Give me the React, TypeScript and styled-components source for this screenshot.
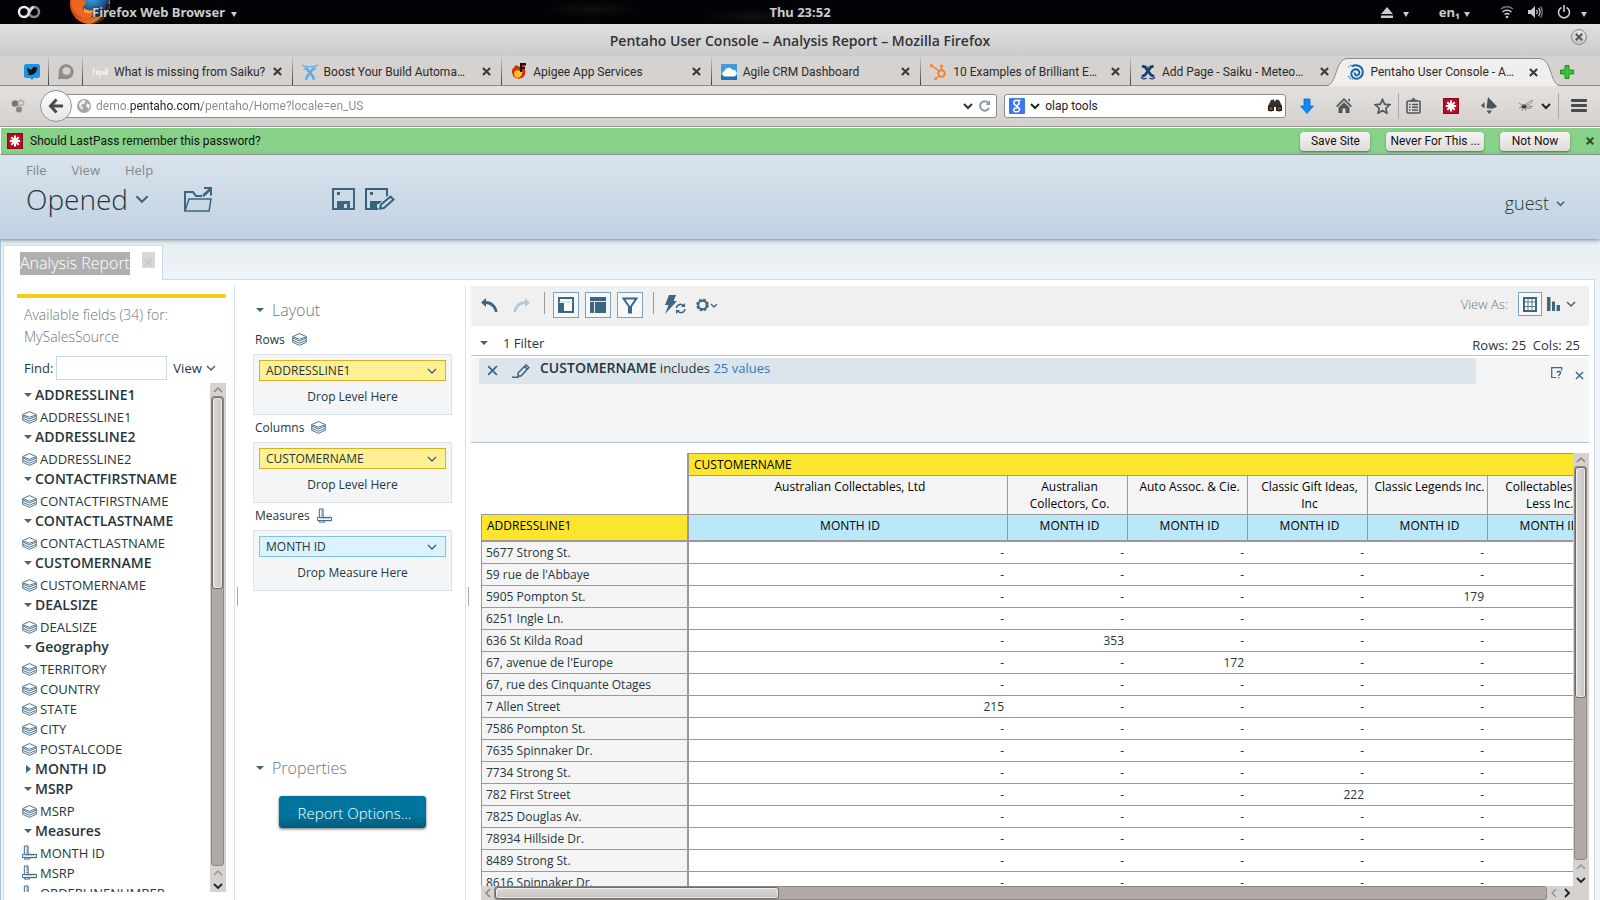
import React from 'react';
import styled, { createGlobalStyle, css } from 'styled-components';

const UI = '"Open Sans", "Noto Sans", sans-serif';
const CHROME = 'Roboto, "Liberation Sans", sans-serif';
const INK = '#3d6480';

const GlobalStyle = createGlobalStyle`
  *, *::before, *::after { box-sizing: border-box; }
  body { margin: 0; font-family: ${UI}; font-size: 12px; color: #26363d; background: #fff; }
  button, input { font: inherit; color: inherit; margin: 0; padding: 0; border: 0; background: none; }
  button { cursor: pointer; white-space: nowrap; }
  svg { display: block; flex: none; }
  a { text-decoration: none; }
`;

const Page = styled.div`
  height: 100vh;
  display: flex;
  flex-direction: column;
  overflow: hidden;
`;

/* ---------- desktop bar and window chrome ---------- */

const DesktopBar = styled.header`
  flex: none;
  height: 24px;
  display: grid;
  grid-template-columns: 1fr auto 1fr;
  align-items: center;
  font: 700 13px "Noto Sans", sans-serif;
  color: #ccc;
  background:
    radial-gradient(ellipse 50px 8px at 37% 40%, #110e0e, transparent),
    radial-gradient(ellipse 50px 8px at 47% 70%, #110e0e, transparent),
    #020306;
  overflow: hidden;
`;
const BarLeft = styled.div`
  display: flex;
  align-items: center;
  padding-left: 17px;
  gap: 29px;
`;
const AppMenu = styled.button`
  display: flex;
  align-items: center;
  gap: 6px;
`;
const AppMenuLabel = styled.span`margin-left: -26px; text-shadow: 0 0 2px #000;`;
const BarRight = styled.div`
  display: flex;
  align-items: center;
  justify-content: flex-end;
  gap: 30px;
  padding-right: 13px;
`;
const BarItem = styled.button<{ $gap: number }>`
  display: flex;
  align-items: center;
  gap: ${p => p.$gap}px;
`;
const StatusIcons = styled.div`display: flex; align-items: center; gap: 14px;`;
const TinyCaret = styled.span`
  border: 3px solid transparent;
  border-top: 5px solid #ccc;
  border-bottom: 0;
  margin-top: 4px;
`;

const TitleBar = styled.div`
  flex: none;
  height: 32px;
  display: grid;
  grid-template-columns: 1fr auto 1fr;
  align-items: center;
  background: linear-gradient(#e0e0e0, #cbcbcb);
  font: 600 14px ${UI};
  color: #333;
`;
const WindowClose = styled.button`
  grid-column: 3;
  justify-self: end;
  margin: 0 13px 6px 0;
  width: 16px;
  height: 16px;
  border-radius: 50%;
  border: 1px solid #888;
  background: linear-gradient(#e6e6e6, #c4c4c4);
  display: grid;
  place-items: center;
`;

const TabStrip = styled.nav`
  flex: none;
  height: 30px;
  display: flex;
  padding-left: 15px;
  background: #d6d2cf;
  border-bottom: 1px solid #8d8a86;
  font: 12px ${CHROME};
  color: #2b2b2b;
`;
const PinnedTab = styled.button`
  width: 34px;
  height: 29px;
  padding-top: 2px;
  display: grid;
  place-items: center;
  border-right: 1px solid;
  border-image: linear-gradient(#d6d2cf, #3a3a38) 1;
`;
const TabBox = styled.div<{ $active?: boolean; $last?: boolean }>`
  flex: 1 1 0;
  min-width: 0;
  height: 29px;
  position: relative;
  display: flex;
  align-items: center;
  padding: 2px 10px 0 9px;
  gap: 6px;
  ${p => !p.$active && !p.$last && css`
    border-right: 1px solid;
    border-image: linear-gradient(#d6d2cf, #3a3a38) 1;
  `}
  ${p => p.$active && css`
    height: 30px;
    background: linear-gradient(#8d8a86 1px, #f0efed 1px) no-repeat 9px 2px / calc(100% - 17px) 100%;
  `}
`;
const TabEdge = styled.svg<{ $side: 'left' | 'right' }>`
  position: absolute;
  top: 2px;
  ${p => p.$side}: -13px;
  ${p => p.$side === 'right' && 'transform: scaleX(-1);'}
`;
const TabLabel = styled.button`
  flex: 1;
  min-width: 0;
  height: 100%;
  display: flex;
  align-items: center;
  gap: 6px;
  text-align: left;
  position: relative;
`;
const PlainButton = styled.button`
  display: grid;
  place-items: center;
  position: relative;
`;
const NewTab = styled.button`
  width: 52px;
  display: grid;
  place-items: center;
  padding: 2px 14px 0 0;
`;

const NavBar = styled.div`
  flex: none;
  height: 41px;
  display: flex;
  align-items: center;
  background: linear-gradient(#e4e1df, #d4d0cd);
  border-bottom: 1px solid #9a9693;
  padding: 0 13px 1px 11px;
  font: 12px ${CHROME};
  color: #222;
`;
const BackButton = styled.button`
  width: 32px;
  height: 32px;
  margin: 0 -12px 0 15px;
  border-radius: 50%;
  border: 1px solid #8797a6;
  background: linear-gradient(#fff, #e6e4e3);
  display: grid;
  place-items: center;
  z-index: 1;
`;
const Field = styled.div<{ $grow: number }>`
  flex: ${p => p.$grow} 1 0;
  min-width: 0;
  height: 24px;
  display: flex;
  align-items: center;
  gap: 4px;
  background: #fff;
  border: 1px solid #8e8a87;
  border-radius: 3px;
`;
const UrlField = styled(Field)`padding: 0 5px 0 16px; margin-right: 7px; gap: 5px;`;
const SearchField = styled(Field)`padding: 0 2px 0 4px; gap: 5px;`;
const FieldInput = styled.input`
  flex: 1;
  min-width: 0;
  height: 22px;
  outline: none;
`;
const UrlInput = styled(FieldInput)`
  color: transparent;
  background: linear-gradient(90deg, #8a8a8a 33px, #222 33px 106px, #8a8a8a 106px);
  background-clip: text;
`;
const NavTools = styled.div`
  display: flex;
  align-items: center;
  gap: 22px;
  padding-left: 14px;
`;
const ToolPair = styled.div`display: flex; align-items: center; gap: 7px;`;
const NavRule = styled.span`width: 1px; height: 26px; background: #aaa9ad;`;

const Notice = styled.div`
  flex: none;
  height: 28px;
  display: flex;
  align-items: center;
  gap: 16px;
  background: #87d189;
  border: solid;
  border-width: 1px 0 1px 1px;
  border-color: #fff transparent #8f9a8c #fff;
  padding: 0 6px;
  font: 12px ${CHROME};
  color: #111;
`;
const NoticeText = styled.p`
  flex: 1;
  margin: 0;
  display: flex;
  align-items: center;
  gap: 7px;
`;
const NoticeButton = styled.button`
  height: 19px;
  min-width: 70px;
  padding: 0 4px;
  border-radius: 4px;
  background: linear-gradient(#f6f5f4, #dedad8);
  box-shadow: 0 1px 2px #4d7a4e;
`;

/* ---------- console header ---------- */

const ConsoleHeader = styled.header`
  flex: none;
  height: 84px;
  display: flex;
  justify-content: space-between;
  align-items: flex-start;
  padding: 5px 35px 0 26px;
  background: linear-gradient(#d9e3ec, #c1d2e2);
  box-shadow: 0 1px 4px #6f7f8c;
  position: relative;
`;
const MenuRow = styled.div`
  display: flex;
  gap: 25px;
  font-size: 13px;
  line-height: 20px;
  color: #84888b;
`;
const ActionRow = styled.div`
  display: flex;
  align-items: center;
  height: 38px;
`;
const Perspective = styled.button`
  display: flex;
  align-items: center;
  gap: 7px;
  font-weight: 300;
  font-size: 28px;
  line-height: 38px;
  margin-right: 35px;
`;
const SaveGroup = styled.div`display: flex; gap: 10px; margin-left: 120px;`;
const UserMenu = styled.button`
  display: flex;
  align-items: center;
  gap: 7px;
  margin-top: 30px;
  font-weight: 300;
  font-size: 18px;
  line-height: 26px;
`;

/* ---------- workspace ---------- */

const Workspace = styled.main`
  flex: 1;
  min-height: 0;
  display: flex;
  flex-direction: column;
  padding: 6px 5px 0 3px;
  border-left: 1px solid #a9c5dc;
  background: linear-gradient(#e6eef2, #f2f6fa 60px);
`;
const ReportTabs = styled.div`display: flex; align-items: flex-end; height: 35px; margin-left: -1px;`;
const ReportTab = styled.div`
  height: 35px;
  width: 160px;
  display: flex;
  align-items: flex-start;
  gap: 12px;
  padding: 6px 0 0 16px;
  background: #fff;
  border: 1px solid #cbdce8;
  border-bottom: 0;
  z-index: 1;
`;
const ReportName = styled.button`
  font-weight: 300;
  font-size: 16px;
  line-height: 23px;
  color: #fff;
  background: #afafaf;
`;
const ReportClose = styled.button`
  width: 13px;
  height: 16px;
  background: #d7d7d7;
  display: grid;
  place-items: end center;
  padding-bottom: 1px;
`;
const TabsRest = styled.div`flex: 1; border-bottom: 1px solid #cbdce8;`;
const Report = styled.div`
  flex: 1;
  min-height: 0;
  display: flex;
  padding: 6px 5px 0 0;
  background: #fff;
  border-left: 1px solid #cbdce8;
  border-right: 1px solid #cbdce8;
  margin-left: -1px;
`;
const Splitter = styled.div`
  flex: none;
  width: 6px;
  border-left: 1px solid #d5e3ec;
  display: flex;
  align-items: center;
  padding: 6px 0 0 2px;
  &::after { content: ''; width: 1px; height: 19px; background: #a4a9ad; }
`;

/* fields */

const FieldsPanel = styled.section`
  flex: none;
  width: 230px;
  display: flex;
  flex-direction: column;
  padding: 8px 8px 8px 13px;
`;
const FieldsHead = styled.div`
  border-top: 4px solid #f5cf16;
  padding: 6px 0 0 7px;
`;
const SourceName = styled.h2`
  margin: 0 0 8px;
  font-weight: 300;
  font-size: 14px;
  line-height: 22px;
  color: #6f7679;
`;
const FindRow = styled.div`
  display: flex;
  align-items: center;
  font-size: 13px;
  margin-bottom: 3px;
`;
const FindInput = styled.input`
  width: 111px;
  height: 24px;
  background: #fff;
  border: 1px solid #c8dae7;
  margin: 0 6px 0 3px;
`;
const MenuButton = styled.button`display: flex; align-items: center; gap: 4px;`;
const TreeWrap = styled.div`flex: 1; min-height: 0; display: flex;`;
const Tree = styled.ul`
  flex: 1;
  margin: 0;
  padding: 2px 0 0 5px;
  list-style: none;
  overflow: hidden;
`;
const SubTree = styled.ul`margin: 0; padding: 2px 0 0; list-style: none;`;
const GroupButton = styled.button`
  display: flex;
  align-items: center;
  gap: 3px;
  padding-left: 2px;
  height: 20px;
  font-weight: 600;
  font-size: 14px;
  line-height: 20px;
`;
const ItemButton = styled.button`
  display: flex;
  align-items: center;
  gap: 3px;
  height: 20px;
  font-size: 13px;
  line-height: 20px;
`;

/* layout */

const LayoutPanel = styled.section`
  flex: none;
  width: 225px;
  padding: 12px 13px 0 13px;
`;
const SectionTitle = styled.button`
  display: flex;
  align-items: center;
  gap: 8px;
  font-weight: 300;
  font-size: 16px;
  line-height: 24px;
  color: #6f7679;
  padding-left: 3px;
`;
const ZoneLabel = styled.h3`
  margin: 0;
  display: flex;
  align-items: center;
  gap: 7px;
  height: 27px;
  padding: 0 0 2px 2px;
  font-weight: 400;
  font-size: 12px;
`;
const Zones = styled.div`padding-top: 5px; height: 434px;`;
const Zone = styled.div`
  height: 61px;
  padding: 5px;
  background: #f3f5f7;
  border: 1px solid #d9e3e9;
  text-align: center;
  line-height: 32px;
`;
const Chip = styled.button<{ $measure?: boolean }>`
  width: 100%;
  height: 21px;
  line-height: 19px;
  display: flex;
  align-items: center;
  justify-content: space-between;
  padding: 0 8px 0 6px;
  background: ${p => (p.$measure ? '#dcf2fc' : '#fff094')};
  border: 1px solid ${p => (p.$measure ? '#7fc4e4' : '#d9b120')};
`;
const OptionsButton = styled.button`
  display: block;
  margin: 16px 0 0 26px;
  width: 147px;
  height: 32px;
  padding: 2px 0 0 4px;
  border-radius: 3px;
  background: linear-gradient(#00749c 60%, #005c7d);
  box-shadow: 0 1px 3px #666;
  color: #fff;
  font-weight: 300;
  font-size: 15px;
`;

/* result */

const Result = styled.section`
  flex: 1;
  min-width: 0;
  display: flex;
  flex-direction: column;
`;
const Toolbar = styled.div`
  flex: none;
  height: 40px;
  display: flex;
  align-items: flex-start;
  gap: 6px;
  padding: 6px 13px 0 5px;
  background: #f0f0f0;
`;
const Tool = styled.button<{ $on?: boolean; $size?: number }>`
  width: ${p => p.$size || 26}px;
  height: ${p => p.$size || 26}px;
  display: grid;
  place-items: center;
  ${p => p.$on && 'border: 1px solid #7aa2b8; background: #f6f8fa;'}
`;
const ToolRule = styled.span`width: 1px; height: 22px; margin: 0 2px 0 4px; background: #999;`;
const ViewAs = styled.div`
  margin-left: auto;
  display: flex;
  align-items: center;
  gap: 5px;
  font-weight: 300;
  font-size: 13px;
  color: #6f7679;
`;
const ViewAsLabel = styled.span`margin-right: 5px;`;
const FilterHead = styled.div`
  flex: none;
  height: 30px;
  display: flex;
  align-items: center;
  justify-content: space-between;
  padding: 5px 9px 0 9px;
  border-bottom: 1px solid #a9c5d6;
  margin-bottom: 2px;
  font-size: 13px;
`;
const FilterToggle = styled.button`display: flex; align-items: center; gap: 15px;`;
const Counts = styled.span`padding-top: 4px;`;
const FilterArea = styled.div`
  flex: none;
  height: 85px;
  display: flex;
  align-items: flex-start;
  justify-content: space-between;
  background: #f3f5f7;
  border-bottom: 1px solid #a9c5d6;
  padding: 0 5px 0 8px;
`;
const FilterBar = styled.div`
  flex: 1;
  height: 26px;
  display: flex;
  align-items: center;
  gap: 14px;
  padding: 0 8px 4px;
  background: #dbe5eb;
  font-size: 13px;
  margin-right: 75px;
`;
const FilterIcon = styled.button`padding-top: 3px;`;
const FilterText = styled.p`
  margin: 0 0 0 -4px;
  padding-bottom: 4px;
  b { font-weight: 600; font-size: 14px; }
  a { color: #2a7ac2; }
`;
const FilterActions = styled.div`display: flex; gap: 12px; padding-top: 8px; button:last-child { padding-top: 5px; }`;
const GridArea = styled.div`
  flex: 1;
  min-height: 0;
  display: grid;
  grid-template: minmax(0, 1fr) 14px / minmax(0, 1fr) 16px;
  margin: 10px 0 0 10px;
`;
const GridView = styled.div`overflow: hidden;`;
const DataTable = styled.table`
  table-layout: fixed;
  width: 1127px;
  border-collapse: separate;
  border-spacing: 0;
`;
const Corner = styled.td`border-right: 2px solid #999; border-bottom: 1px solid #999; padding: 0;`;
const HeadCell = styled.th<{ $tone?: 'yellow' | 'blue' | 'grey'; $edge?: 'left' | 'top' }>`
  padding: ${p => (p.$edge ? '0 5px' : '2px 0 0 4px')};
  font-weight: 400;
  line-height: 17px;
  color: #000;
  vertical-align: top;
  text-align: ${p => (p.$edge ? 'left' : 'center')};
  background: ${p => ({ yellow: '#fbe52d', blue: '#bae8f9', grey: '#f4f4f4' })[p.$tone || 'grey']};
  border-right: 1px solid #999;
  border-bottom: ${p => (p.$tone === 'blue' || p.$edge === 'left' ? 2 : 1)}px solid #999;
  ${p => p.$edge === 'top' && 'border-top: 1px solid #999; height: 23px; padding-top: 2px;'}
  ${p => p.$edge === 'left' && 'border-left: 1px solid #999; border-right-width: 2px; padding-top: 2px;'}
`;
const HeadRow = styled.tr<{ $h: number }>`height: ${p => p.$h}px;`;
const RowHead = styled.th`
  height: 22px;
  padding: 0 4px;
  font-weight: 400;
  line-height: 20px;
  text-align: left;
  background: #f4f4f4;
  border: solid #999;
  border-width: 0 2px 1px 1px;
`;
const Value = styled.td`
  padding: 0 4px;
  line-height: 20px;
  text-align: right;
  border-bottom: 1px solid #999;
`;

/* scrollbars */

const Bar = styled.div<{ $h?: boolean }>`
  display: flex;
  flex-direction: ${p => (p.$h ? 'row' : 'column')};
  align-items: center;
  flex: none;
  ${p => (p.$h ? 'height: 14px;' : 'width: 16px;')}
  background: #d6d2cf;
`;
const Track = styled.div<{ $h?: boolean }>`
  flex: 1;
  align-self: stretch;
  margin: ${p => (p.$h ? '0' : '0 2px 0 1px')};
  background: #b1a9a5;
  border: 1px solid #8f8985;
  border-radius: 3px;
`;
const Thumb = styled.div<{ $h?: boolean; $size: number }>`
  ${p => (p.$h ? `width: ${p.$size}%; height: 12px;` : `height: ${p.$size}%; width: 100%;`)}
  background: ${p => (p.$h ? 'linear-gradient(#dcd9d6, #c6c2bf)' : 'linear-gradient(90deg, #dcd9d6, #c6c2bf)')};
  border: 1px solid #6f6a66;
  border-radius: 3px;
  box-shadow: inset 0 0 0 1px #efedeb;
`;
const ScrollCorner = styled.div`background: #d6d2cf;`;

/* ---------- icons ---------- */

const Chevron = ({ w = 10, c = INK, s = 1.5, dir = 0 }: { w?: number; c?: string; s?: number; dir?: number }) => (
  <svg width={w} height={w} viewBox="0 0 10 10" fill="none" stroke={c} strokeWidth={s}>
    <path d="M1 3l4 4 4-4" transform={`rotate(${dir} 5 5)`} />
  </svg>
);
const Cross = ({ w = 10, c = INK, s = 1.5 }: { w?: number; c?: string; s?: number }) => (
  <svg width={w} height={w} viewBox="0 0 10 10" stroke={c} strokeWidth={s}><path d="M1 1l8 8M9 1l-8 8" /></svg>
);
const Caret = ({ closed }: { closed?: boolean }) => (
  <svg width="8" height="8" viewBox="0 0 8 8" fill={INK}>
    {closed ? <path d="M2 0l5 4-5 4z" /> : <path d="M0 2h8L4 6z" />}
  </svg>
);
const Layers = () => (
  <svg width="15" height="13" viewBox="0 0 15 13" fill="#fff" stroke={INK} strokeWidth="0.9">
    <path d="M7.5 12.3L.7 9.300V7.500l6.800-2 6.800 2v1.800z" />
    <path d="M7.500 10.200L.7 7.300V5.400l6.800-2 6.800 2v1.900z" />
    <path d="M7.500 8L.7 5V3.600L7.500.6l6.800 3V5z" />
    <path d="M.7 3.700l6.800 2.600 6.800-2.600" />
  </svg>
);
const Ruler = () => (
  <svg width="15" height="16" viewBox="0 0 16 16" fill="#eef5fa" stroke={INK}>
    <path d="M2.500 14.500v-14h4v9h8.900v3.500H8v1.500z" />
    <path d="M.5 9.500h14.900v3.300H.5z" />
    <path d="M4.500 2.500h2M4.500 5h2M4.500 7.500h2M4.500 9.500v1.500M7 9.500v1.500M9.500 9.500v1.500M12 9.500v1.500" strokeWidth="0.8" />
  </svg>
);
const LastPass = () => (
  <svg width="16" height="16" viewBox="0 0 16 16">
    <rect width="16" height="16" fill="#b50d24" /><rect x=".5" y=".5" width="15" height="15" fill="none" stroke="#8a0a1b" />
    <path d="M8 2.500v11M2.800 8h10.400M4.300 4.200l7.400 7.600M11.700 4.200l-7.400 7.600" stroke="#fff" strokeWidth="2" />
  </svg>
);
const TabCross = () => <Cross w={9} c="#3c3c3c" s={2.400} />;

const FirefoxLogo = () => (
  <svg width="42" height="24" viewBox="0 0 42 24">
    <defs>
      <radialGradient id="fxo" cx=".25" cy=".3" r=".8"><stop offset="0" stopColor="#f07a2a" /><stop offset=".6" stopColor="#d8401c" /><stop offset="1" stopColor="#e58a1e" /></radialGradient>
      <radialGradient id="fxb" cx=".4" cy=".3" r=".7"><stop offset="0" stopColor="#3fa9e6" /><stop offset="1" stopColor="#0a2f63" /></radialGradient>
    </defs>
    <circle cx="20" cy="4" r="20" fill="url(#fxo)" />
    <circle cx="25" cy="3" r="14" fill="url(#fxb)" />
    <path d="M2 0c8 1 9-1 14 1 0 4-3 4-3 8 3 4 9 4 12 2-1 6-8 9-14 6C5 14 1 8 2 0z" fill="#ec6423" />
    <path d="M14 8c3 3 8 3 11 1-1 4-6 6-11 3z" fill="#f5a03c" />
    <path d="M40 4c0 12-9 20-20 20 9-3 15-9 16-20z" fill="#2a1a10" opacity=".8" />
  </svg>
);
const Infinity = () => (
  <svg width="24" height="14" viewBox="0 0 24 14" fill="none" strokeWidth="2.400">
    <circle cx="17" cy="7" r="5" stroke="#8b8b8b" />
    <circle cx="7" cy="7" r="5" stroke="#eee" />
    <path d="M8 12c4-1 5-9 9-10" stroke="#ddd" />
  </svg>
);
const Eject = () => <svg width="12" height="12" viewBox="0 0 12 12" fill="#ccc"><path d="M6 1l6 7H0zM0 9.500h12V12H0z" /></svg>;
const Wifi = () => (
  <svg width="14" height="14" viewBox="0 0 14 14" fill="none" stroke="#ccc" strokeWidth="1.500">
    <path d="M1 4c3.500-3 8.500-3 12 0" stroke="#777" /><path d="M2.500 7c2.500-2.200 6.500-2.200 9 0" /><path d="M4.500 9.500c1.500-1.300 3.500-1.300 5 0" /><circle cx="7" cy="12" r="1.300" fill="#ccc" stroke="none" />
  </svg>
);
const Speaker = () => (
  <svg width="15" height="14" viewBox="0 0 15 14" fill="none" stroke="#ccc" strokeWidth="1.300">
    <path d="M0 5h3l4-4v12L3 9H0z" fill="#ccc" stroke="none" /><path d="M8.500 5c1 1 1 3 0 4M10.500 3c2 2 2 6 0 8" /><path d="M12.500 1.500c2.300 3 2.300 8 0 11" stroke="#777" />
  </svg>
);
const Power = () => (
  <svg width="14" height="14" viewBox="0 0 14 14" fill="none" stroke="#ccc" strokeWidth="1.600"><path d="M4.500 2.500a5.500 5.500 0 1 0 5 0M7 0v7" /></svg>
);

const favicons: Record<string, React.ReactNode> = {
  twitter: <svg width="16" height="16" viewBox="0 0 16 16"><path d="M1.500 0h13L16 1.500v11L14.500 14H10l-2 2-2-2H1.500L0 12.500v-11z" fill="#1b95e8" /><path d="M3 3.500c1.500 1.500 3 2 5 2 0-2.500 3-3.500 4.500-2l1.300-.4-.8 1.400c0 5-5 8-10 5.500 1 0 2-.2 2.800-.8-1.300-.3-2-1-2.300-2h1C3.300 6.500 2.500 5.200 3 3.500z" fill="#141414" /></svg>,
  chat: <svg width="18" height="17" viewBox="0 0 18 17"><path d="M1 16l1-5a7.500 7.500 0 1 1 5 5z" fill="#8d8d8d" /><circle cx="9.500" cy="8" r="4" fill="#d6d2cf" stroke="#b5b5b5" /></svg>,
  poll: <svg width="16" height="16" viewBox="0 0 16 16" fill="none" stroke="#f3f2f1" strokeWidth="1.200"><path d="M1.500 4v7M.5 6h2.500M4 6.500L5 11l1-4.500M7.500 14V6.500M9 8.800v0M14 4v7M15.500 4v7" /><circle cx="8.500" cy="8.800" r="1.500" /><circle cx="12" cy="9" r="1.300" /></svg>,
  build: <svg width="16" height="16" viewBox="0 0 16 16" fill="none" stroke="#59ace8" strokeWidth="1.700"><path d="M0 .9c3 2.500 13 2.500 16 0" strokeWidth="1.300" /><path d="M2.500 4.500l2.500.5 6 7.500 1 3.200M13.500 4.500L11 5l-6 7.500-1 3.200" strokeWidth="2.600" /></svg>,
  apigee: <svg width="16" height="17" viewBox="0 0 16 17"><path d="M1 9c0-4 2-4 4-7 1 1 3 1 4 2l2-3h4v2l-3 1c2 2 3 4 2 7-1 6-12 7-13-2z" fill="#d42a0c" /><path d="M3 11c0-3 2-4 3-4 2 0 3 2 5 1 2 6-7 10-8 3z" fill="#ffc31a" /><path d="M9 0h6v2h-4v2h3v2h-3v3H9z" fill="#1c0f0a" /></svg>,
  agile: <svg width="16" height="16" viewBox="0 0 16 16"><rect width="16" height="16" fill="#3f9cd8" /><path d="M0 11h16v5H0z" fill="#1d72b8" /><path d="M3.500 12.500a2.800 2.800 0 0 1 0-5.500 4.300 4.300 0 0 1 8-1 3.300 3.300 0 0 1 1.500 6.500z" fill="#fff" /></svg>,
  hub: <svg width="17" height="16" viewBox="0 0 17 16" fill="none" stroke="#f5822a"><circle cx="11.500" cy="9.500" r="3.300" strokeWidth="2" /><path d="M1 1l8 6M11.500 6V2M9 12l-3.500 3" strokeWidth="1.500" /><path d="M0 .5h2.500v2.500H1zM10.500 1h2v2h-2zM4.500 14h2v2h-2z" fill="#f5822a" strokeWidth=".6" /></svg>,
  saiku: <svg width="16" height="16" viewBox="0 0 16 16" fill="none" stroke="#173f73"><path d="M2 2l3 1 6 8 3 1.500M13.500 2L11 3l-6 8-3 1.500" strokeWidth="2.800" /><path d="M9.500 14c2 1.500 4.500 1 5.500-1M6.500 14c-2 1.500-4.500 1-5.500-1" strokeWidth="1.200" /><path d="M7 2.500c.3 1.200 1.700 1.200 2 0" /></svg>,
  pentaho: <svg width="16" height="16" viewBox="0 0 16 16" fill="none" stroke="#0f67a8" strokeWidth="1.900"><path d="M3.500 2.500C9-.8 15 3 14.800 8.500 14.500 13.500 9 16.500 5 13.500 1.800 10.800 3.500 5.300 8 5.300c3.300.2 4.500 4 2 5.700-2 1.200-3.800-.8-2.700-2.400" /><path d="M0 3.500L3.500.5" strokeDasharray="1.500 1" strokeWidth="1" /><path d="M.5 12c1 2 2 3 4 3.500" strokeDasharray="1.500 1" strokeWidth="1.200" /></svg>,
};

const Binoculars = () => (
  <svg width="16" height="13" viewBox="0 0 16 13" fill="#333"><path d="M1 7l3-6 3-.5L8 3l1-2.500 3 .5 3 6v5H9V8H7v4H1z" /><circle cx="3.800" cy="9.500" r="2.500" fill="#6d4a33" stroke="#111" /><circle cx="12.200" cy="9.500" r="2.500" fill="#6d4a33" stroke="#111" /></svg>
);
const navIcons: Record<string, React.ReactNode> = {
  download: <svg width="14" height="16" viewBox="0 0 14 16"><path d="M4 1h6v7h3.500L7 15.500.5 8H4z" fill="#1088f5" stroke="#0a68c4" strokeWidth=".8" /></svg>,
  home: <svg width="16" height="16" viewBox="0 0 16 16" fill="#53575a"><path d="M8 0l8 8-1.200 1.200L8 2.600 1.200 9.200 0 8zM2.500 9.500L8 4.200l5.500 5.300V15h-4v-4.500h-3V15h-4zM12 1h2v3l-2-2z" /></svg>,
  star: <svg width="17" height="16" viewBox="0 0 17 16" fill="none" stroke="#53575a" strokeWidth="1.700"><path d="M8.500 1.500l2.100 4.700 5 .6-3.700 3.400 1 5-4.400-2.600-4.400 2.600 1-5L1.400 6.800l5-.6z" /></svg>,
  list: <svg width="15" height="16" viewBox="0 0 15 16" fill="none" stroke="#53575a" strokeWidth="1.600"><rect x="1" y="3" width="13" height="12" rx="1" /><path d="M4 2.500h7M3 6.500h1.500M6 6.500h6M3 9.200h1.500M6 9.200h6M3 12h1.500M6 12h6" /><path d="M6 1h3" /></svg>,
  pointer: <svg width="16" height="17" viewBox="0 0 16 17" fill="#4a525b"><path d="M7 0l9 9.500c-3 2.500-7 2.500-10.500 1.500zM3.500 5v6.500L0 8.500zM5.500 13.500h5.500L8.300 17z" /></svg>,
  fly: <svg width="15" height="13" viewBox="0 0 15 13" fill="none" stroke="#777"><ellipse cx="5" cy="7.500" rx="2.500" ry="1.800" fill="#333" /><path d="M6 6l7-5c1 2-1 4-5 5M7 8l6-1c0 2-3 3-6 2M0 4l3 2M0 9l3-1M3 12l1-3M7 12L6 9" strokeWidth=".8" /></svg>,
  menu: <svg width="16" height="14" viewBox="0 0 16 14" fill="#484b4d"><rect width="16" height="3" rx="1" /><rect y="5" width="16" height="3" rx="1" /><rect y="10" width="16" height="3" rx="1" /></svg>,
};
const Dots = () => (
  <svg width="14" height="14" viewBox="0 0 14 14"><circle cx="4" cy="4.500" r="3.300" fill="#777" /><circle cx="10" cy="4" r="3.500" fill="#b5b5b5" /><circle cx="8" cy="10.500" r="3" fill="#8a8a8a" /><circle cx="10" cy="4" r="1.500" fill="#e3e3e3" /></svg>
);
const Globe = () => (
  <svg width="14" height="14" viewBox="0 0 14 14"><circle cx="7" cy="7" r="7" fill="#a5a5a5" /><path d="M6 1l3 1-2 3-3 1 2 3-1 2-3-4 .500-3zM10 4l3 2-1 4-3-3z" fill="#f2f2f2" /></svg>
);

const tools: Record<string, React.ReactNode> = {
  undo: <svg width="17" height="15" viewBox="0 0 17 15"><path d="M5 0L0 4.500 5 9V6c4.500.3 8 3.500 9 8h2.500C16 8 11.500 3.500 5 3z" fill={INK} /></svg>,
  redo: <svg width="17" height="15" viewBox="0 0 17 15"><path d="M12 0l5 4.500L12 9V6c-4.500.3-8 3.500-9 8H.5C1 8 5.500 3.500 12 3z" fill="#b4cade" /></svg>,
  left: <svg width="16" height="16" viewBox="0 0 16 16"><path d="M1 1h14v14H1z" fill="#fff" stroke={INK} strokeWidth="2" /><path d="M1 5h14" stroke="#b4cade" /><path d="M1 6h5v9H1z" fill={INK} /></svg>,
  top: <svg width="16" height="16" viewBox="0 0 16 16"><path d="M0 0h16v4H0zM0 5h4v11H0zM5 5h11v11H5z" fill={INK} /><path d="M0 4.500h16M4.500 5v11" stroke="#dde8f0" /></svg>,
  funnel: <svg width="16" height="17" viewBox="0 0 16 17"><path d="M1.500 1.500h13L9 9.500v6H7v-6z" fill="none" stroke={INK} strokeWidth="2" /></svg>,
  refresh: <svg width="21" height="20" viewBox="0 0 21 20"><path d="M4 0h7L8.500 6H12L0 19l3.500-9H0z" fill={INK} /><path d="M11.500 13c.5-4 5.500-5 7.500-1.500M20 14c-.5 4-5.500 5-7.500 1.500" fill="none" stroke={INK} strokeWidth="1.500" /><path d="M20 8v4h-4zM11 19v-4h4z" fill={INK} /></svg>,
  gear: <svg width="22" height="14" viewBox="0 0 22 14" fill="none" stroke={INK}><circle cx="6.500" cy="7" r="5.300" strokeWidth="2" strokeDasharray="2.600 1.560" /><circle cx="6.500" cy="7" r="4.200" strokeWidth="2" /><path d="M15 6l3 3 3-3" strokeWidth="1.300" /></svg>,
};
const Pencil = () => (
  <svg width="18" height="14" viewBox="0 0 18 14" fill="none" stroke={INK} strokeWidth="1.500"><path d="M6 9l8-8 2.800 2.500L9 12H6zM0 13.200h7M12.500 2.500l2.800 2.600" /></svg>
);
const OpenFolder = () => (
  <svg width="28" height="25" viewBox="0 0 28 25" fill="none" stroke={INK} strokeWidth="2"><path d="M1 24V5h8l3 4h6" /><path d="M5 12h22l-2 12H1z" strokeWidth="1.500" /><path d="M19 9l8-7.500" strokeWidth="2.500" /><path d="M20 1h7v7.500" /></svg>
);
const Save = ({ edit }: { edit?: boolean }) => (
  <svg width={edit ? 30 : 23} height="22" viewBox={`0 0 ${edit ? 30 : 23} 22`}>
    <rect x="1" y="1" width="21" height="20" fill="none" stroke={edit ? '#34637c' : INK} strokeWidth="2" />
    <path d="M5 13h13v8h-3v-5h-3v5H5z" fill={edit ? '#34637c' : INK} /><path d="M5 4h3v3H5z" fill={INK} />
    {edit && <><path d="M13 22l1-6 8-8h8v14z" fill="#cbd9e6" /><path d="M15 20.500l1-4 9.500-8 3 3-9.500 8.500z" fill="none" stroke="#34637c" strokeWidth="2" /></>}
  </svg>
);
const GridIcon = () => (
  <svg width="14" height="15" viewBox="0 0 14 15"><rect x="1" y="1" width="12" height="13" fill="#fff" stroke={INK} strokeWidth="2" /><path d="M1 5h12M1 9.500h12M5 1v13M9 1v13" stroke="#56788f" /></svg>
);
const BarsIcon = () => <svg width="14" height="14" viewBox="0 0 14 14" fill={INK}><path d="M0 0h3.500v14H0zM5 4.500h3V14H5zM9.500 8H13v6H9.500z" /></svg>;
const HelpNote = () => (
  <svg width="12" height="12" viewBox="0 0 12 12" fill="none" stroke={INK} strokeWidth="1.200"><path d="M5 10.500H.7V.7h10v3" /><path d="M6 5.500c.5-1.500 4-1.300 3.500.7-.3 1.200-1.700 1.200-1.700 2.800M7.800 10.200v1.300" strokeWidth="1.400" /></svg>
);

/* ---------- data ---------- */

const tabs = [
  ['poll', 'What is missing from Saiku?'],
  ['build', 'Boost Your Build Automa…'],
  ['apigee', 'Apigee App Services'],
  ['agile', 'Agile CRM Dashboard'],
  ['hub', '10 Examples of Brilliant E…'],
  ['saiku', 'Add Page - Saiku - Meteo…'],
  ['pentaho', 'Pentaho User Console - A…'],
];

type Group = { name: string; items: string[]; measure?: boolean };
const groups: Group[] = [
  { name: 'ADDRESSLINE1', items: ['ADDRESSLINE1'] },
  { name: 'ADDRESSLINE2', items: ['ADDRESSLINE2'] },
  { name: 'CONTACTFIRSTNAME', items: ['CONTACTFIRSTNAME'] },
  { name: 'CONTACTLASTNAME', items: ['CONTACTLASTNAME'] },
  { name: 'CUSTOMERNAME', items: ['CUSTOMERNAME'] },
  { name: 'DEALSIZE', items: ['DEALSIZE'] },
  { name: 'Geography', items: ['TERRITORY', 'COUNTRY', 'STATE', 'CITY', 'POSTALCODE'] },
  { name: 'MONTH ID', items: [] },
  { name: 'MSRP', items: ['MSRP'] },
  { name: 'Measures', items: ['MONTH ID', 'MSRP', 'ORDERLINENUMBER'], measure: true },
];

const customers = ['Australian Collectables, Ltd', 'Australian Collectors, Co.', 'Auto Assoc. & Cie.', 'Classic Gift Ideas, Inc', 'Classic Legends Inc.', 'Collectables For Less Inc.'];
const rows: [string, number?, string?][] = [
  ['5677 Strong St.'], ["59 rue de l'Abbaye"], ['5905 Pompton St.', 4, '179'], ['6251 Ingle Ln.'],
  ['636 St Kilda Road', 1, '353'], ["67, avenue de l'Europe", 2, '172'], ['67, rue des Cinquante Otages'],
  ['7 Allen Street', 0, '215'], ['7586 Pompton St.'], ['7635 Spinnaker Dr.'], ['7734 Strong St.'],
  ['782 First Street', 3, '222'], ['7825 Douglas Av.'], ['78934 Hillside Dr.'], ['8489 Strong St.'], ['8616 Spinnaker Dr.'],
];

const ArrowSlot = styled.span`
  flex: none;
  width: 13px;
  height: 13px;
  display: grid;
  place-items: center;
`;

function ScrollBar({ horizontal, size }: { horizontal?: boolean; size: number }) {
  const back = horizontal ? 90 : 180;
  const ahead = horizontal ? 270 : 0;
  return (
    <Bar $h={horizontal} aria-hidden="true">
      <ArrowSlot><Chevron c="#8b8682" s={1.5} dir={back} /></ArrowSlot>
      <Track $h={horizontal}><Thumb $h={horizontal} $size={size} /></Track>
      <ArrowSlot><Chevron c="#9b9692" s={1.5} dir={back} /></ArrowSlot>
      <ArrowSlot><Chevron c="#222" s={1.8} dir={ahead} /></ArrowSlot>
    </Bar>
  );
}

function BrowserChrome() {
  return (
    <>
      <DesktopBar>
        <BarLeft>
          <Infinity />
          <AppMenu><FirefoxLogo /><AppMenuLabel>Firefox Web Browser</AppMenuLabel><TinyCaret /></AppMenu>
        </BarLeft>
        <span>Thu 23:52</span>
        <BarRight>
          <StatusIcons>
            <BarItem $gap={10} aria-label="Drives"><Eject /><TinyCaret /></BarItem>
          </StatusIcons>
          <BarItem $gap={4} aria-label="Keyboard layout"><span>en₁</span><TinyCaret /></BarItem>
          <StatusIcons>
            <PlainButton aria-label="Network"><Wifi /></PlainButton>
            <PlainButton aria-label="Volume"><Speaker /></PlainButton>
            <BarItem $gap={10} aria-label="Power"><Power /><TinyCaret /></BarItem>
          </StatusIcons>
        </BarRight>
      </DesktopBar>
      <TitleBar>
        <span />
        <span>Pentaho User Console – Analysis Report – Mozilla Firefox</span>
        <WindowClose aria-label="Close window"><Cross w={8} c="#555" s={2.400} /></WindowClose>
      </TitleBar>
      <TabStrip>
        <PinnedTab aria-label="Pinned tab 1">{favicons.twitter}</PinnedTab>
        <PinnedTab aria-label="Pinned tab 2">{favicons.chat}</PinnedTab>
        {tabs.map(([icon, label], i) => {
          const active = i === tabs.length - 1;
          return (
            <TabBox key={label} $active={active} $last={i === tabs.length - 2}>
              {active && (['left', 'right'] as const).map(side => (
                <TabEdge key={side} $side={side} width="22" height="28" viewBox="0 0 22 28">
                  <path d="M0 28C12 28 8 .5 22 .5V28z" fill="#f0efed" />
                  <path d="M0 27.500C12 27.500 8 .5 22 .5" fill="none" stroke="#8d8a86" />
                </TabEdge>
              ))}
              <TabLabel>{favicons[icon]}<span>{label}</span></TabLabel>
              <PlainButton aria-label={`Close ${label}`}><TabCross /></PlainButton>
            </TabBox>
          );
        })}
        <NewTab aria-label="New tab">
          <svg width="14" height="14" viewBox="0 0 14 14"><path d="M5 .5h4V5h4.500v4H9v4.500H5V9H.5V5H5z" fill="#3fc13a" stroke="#1f8f1d" /></svg>
        </NewTab>
      </TabStrip>
      <NavBar>
        <PlainButton aria-label="Site tools"><Dots /></PlainButton>
        <BackButton aria-label="Back">
          <svg width="16" height="16" viewBox="0 0 16 16" fill="none" stroke="#4b4b4b" strokeWidth="3"><path d="M8.500 1.500L2.500 8l6 6.500M3 8h12" /></svg>
        </BackButton>
        <UrlField $grow={938}>
          <Globe />
          <UrlInput aria-label="Address" defaultValue="demo.pentaho.com/pentaho/Home?locale=en_US" />
          <PlainButton aria-label="History"><Chevron c="#333" s={2} /></PlainButton>
          <PlainButton aria-label="Reload">
            <svg width="13" height="13" viewBox="0 0 13 13" fill="none" stroke="#8f9aa3" strokeWidth="2"><path d="M10 3.500A4.700 4.700 0 1 0 11 9" /><path d="M12 1v5H7.500z" fill="#8f9aa3" stroke="none" /></svg>
          </PlainButton>
        </UrlField>
        <SearchField $grow={281}>
          <svg width="16" height="16" viewBox="0 0 16 16"><rect width="16" height="16" rx="1" fill="#3b78f0" /><g fill="none" stroke="#fff" strokeWidth="1.500"><circle cx="7.500" cy="4.800" r="2.600" /><path d="M9.500 2.300h2M8.500 7.500c-3 1.500 1.500 1.500 2 3.500.5 3.500-6 3.800-5.800.8C5 10 7 9.700 8.500 9.700" /></g></svg>
          <PlainButton aria-label="Choose search engine"><Chevron c="#222" s={2} /></PlainButton>
          <FieldInput aria-label="Search" defaultValue="olap tools" />
          <PlainButton aria-label="Run search"><Binoculars /></PlainButton>
        </SearchField>
        <NavTools>
          <PlainButton aria-label="Downloads">{navIcons.download}</PlainButton>
          <PlainButton aria-label="Home">{navIcons.home}</PlainButton>
          <ToolPair><PlainButton aria-label="Bookmark">{navIcons.star}</PlainButton><NavRule /><PlainButton aria-label="Bookmarks list">{navIcons.list}</PlainButton></ToolPair>
          <PlainButton aria-label="LastPass"><LastPass /></PlainButton>
          <PlainButton aria-label="Pointer">{navIcons.pointer}</PlainButton>
          <ToolPair><PlainButton aria-label="Firebug">{navIcons.fly}</PlainButton><PlainButton aria-label="More"><Chevron c="#222" s={2} /></PlainButton><NavRule /></ToolPair>
          <PlainButton aria-label="Menu"><MenuPull>{navIcons.menu}</MenuPull></PlainButton>
        </NavTools>
      </NavBar>
      <Notice>
        <NoticeText><LastPass />Should LastPass remember this password?</NoticeText>
        <NoticeButton>Save Site</NoticeButton>
        <NoticeButton>Never For This ...</NoticeButton>
        <NoticeButton>Not Now</NoticeButton>
        <PlainButton aria-label="Dismiss"><Cross w={8} c="#2c4a2d" s={2.400} /></PlainButton>
      </Notice>
    </>
  );
}

const MenuPull = styled.span`margin-left: -10px;`;

function Fields() {
  return (
    <FieldsPanel>
      <FieldsHead>
        <SourceName>Available fields (34) for:<br />MySalesSource</SourceName>
        <FindRow>
          <label htmlFor="find">Find:</label>
          <FindInput id="find" />
          <MenuButton>View <Chevron /></MenuButton>
        </FindRow>
      </FieldsHead>
      <TreeWrap>
        <Tree>
          {groups.map(g => (
            <li key={g.name}>
              <GroupButton><Caret closed={!g.items.length} />{g.name}</GroupButton>
              {g.items.length > 0 && (
                <SubTree>
                  {g.items.map(item => <li key={item}><ItemButton>{g.measure ? <Ruler /> : <Layers />}{item}</ItemButton></li>)}
                </SubTree>
              )}
            </li>
          ))}
        </Tree>
        <ScrollBar size={41} />
      </TreeWrap>
    </FieldsPanel>
  );
}

function LayoutEditor() {
  return (
    <LayoutPanel>
      <SectionTitle><Caret />Layout</SectionTitle>
      <Zones>
        <ZoneLabel>Rows <Layers /></ZoneLabel>
        <Zone><Chip>ADDRESSLINE1<Chevron /></Chip>Drop Level Here</Zone>
        <ZoneLabel>Columns <Layers /></ZoneLabel>
        <Zone><Chip>CUSTOMERNAME<Chevron /></Chip>Drop Level Here</Zone>
        <ZoneLabel>Measures <Ruler /></ZoneLabel>
        <Zone><Chip $measure>MONTH ID<Chevron /></Chip>Drop Measure Here</Zone>
      </Zones>
      <SectionTitle><Caret />Properties</SectionTitle>
      <OptionsButton>Report Options...</OptionsButton>
    </LayoutPanel>
  );
}

function ResultGrid() {
  return (
    <GridArea>
      <GridView>
        <DataTable>
          <colgroup>
            <col width="208" /><col width="319" />
            {customers.slice(1).map(c => <col key={c} width="120" />)}
          </colgroup>
          <thead>
            <HeadRow $h={23}><Corner rowSpan={2} /><HeadCell $tone="yellow" $edge="top" colSpan={6}>CUSTOMERNAME</HeadCell></HeadRow>
            <HeadRow $h={39}>{customers.map(c => <HeadCell key={c} scope="col">{c}</HeadCell>)}</HeadRow>
            <HeadRow $h={27}>
              <HeadCell $tone="yellow" $edge="left">ADDRESSLINE1</HeadCell>
              {customers.map(c => <HeadCell key={c} $tone="blue">MONTH ID</HeadCell>)}
            </HeadRow>
          </thead>
          <tbody>
            {rows.map(([name, col, value]) => (
              <tr key={name}>
                <RowHead scope="row">{name}</RowHead>
                {customers.map((c, i) => <Value key={c}>{i === col ? value : '-'}</Value>)}
              </tr>
            ))}
          </tbody>
        </DataTable>
      </GridView>
      <ScrollBar size={59} />
      <ScrollBar horizontal size={27} />
      <ScrollCorner />
    </GridArea>
  );
}

export default function App() {
  return (
    <Page>
      <GlobalStyle />
      <BrowserChrome />
      <ConsoleHeader>
        <div>
          <MenuRow><button>File</button><button>View</button><button>Help</button></MenuRow>
          <ActionRow>
            <Perspective>Opened <Chevron w={14} /></Perspective>
            <PlainButton aria-label="Open"><OpenFolder /></PlainButton>
            <SaveGroup>
              <PlainButton aria-label="Save"><Save /></PlainButton>
              <PlainButton aria-label="Save as"><Save edit /></PlainButton>
            </SaveGroup>
          </ActionRow>
        </div>
        <UserMenu>guest <Chevron w={9} s={1.800} /></UserMenu>
      </ConsoleHeader>
      <Workspace>
        <ReportTabs>
          <ReportTab>
            <ReportName>Analysis Report</ReportName>
            <ReportClose aria-label="Close report"><Cross w={9} c="#b9c3ca" s={1.300} /></ReportClose>
          </ReportTab>
          <TabsRest />
        </ReportTabs>
        <Report>
          <Fields />
          <Splitter />
          <LayoutEditor />
          <Splitter />
          <Result>
            <Toolbar>
              <Tool aria-label="Undo">{tools.undo}</Tool>
              <Tool aria-label="Redo">{tools.redo}</Tool>
              <ToolRule />
              <Tool $on aria-label="Show fields">{tools.left}</Tool>
              <Tool $on aria-label="Show layout">{tools.top}</Tool>
              <Tool $on aria-label="Show filters">{tools.funnel}</Tool>
              <ToolRule />
              <Tool aria-label="Auto refresh">{tools.refresh}</Tool>
              <Tool aria-label="More actions">{tools.gear}</Tool>
              <ViewAs>
                <ViewAsLabel>View As:</ViewAsLabel>
                <Tool $on $size={24} aria-label="Table"><GridIcon /></Tool>
                <PlainButton aria-label="Chart"><BarsIcon /></PlainButton>
                <PlainButton aria-label="Choose chart type"><Chevron /></PlainButton>
              </ViewAs>
            </Toolbar>
            <FilterHead>
              <FilterToggle><Caret />1 Filter</FilterToggle>
              <Counts>Rows: 25&nbsp; Cols: 25</Counts>
            </FilterHead>
            <FilterArea>
              <FilterBar>
                <FilterIcon aria-label="Remove filter"><Cross w={11} /></FilterIcon>
                <FilterIcon aria-label="Edit filter"><Pencil /></FilterIcon>
                <FilterText><b>CUSTOMERNAME</b> includes <a href="#values">25 values</a></FilterText>
              </FilterBar>
              <FilterActions>
                <PlainButton aria-label="Help"><HelpNote /></PlainButton>
                <PlainButton aria-label="Close filters"><Cross w={9} /></PlainButton>
              </FilterActions>
            </FilterArea>
            <ResultGrid />
          </Result>
        </Report>
      </Workspace>
    </Page>
  );
}
